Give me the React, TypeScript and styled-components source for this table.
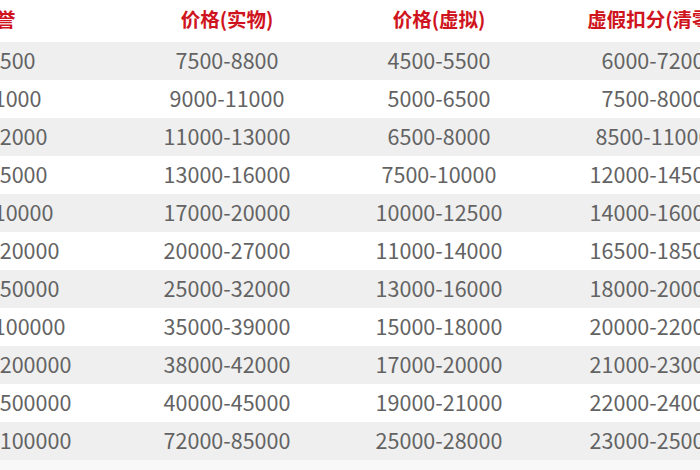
import { createGlobalStyle, styled } from "styled-components";

const GlobalStyle = createGlobalStyle`
  html, body {
    margin: 0;
    padding: 0;
    background: #ffffff;
    overflow: hidden;
  }
  body {
    width: 700px;
    height: 470px;
    font-family: "Noto Sans CJK SC", "Noto Sans", sans-serif;
  }
`;

const Page = styled.div`
  width: 700px;
  height: 470px;
  overflow: hidden;
  background: #f8f8f8;
`;

const Table = styled.div`
  margin-left: -130px;
  width: 890px;
  display: flex;
  flex-direction: column;
`;

const Row = styled.div<{ $shade: "head" | "gray" | "white" }>`
  display: grid;
  grid-template-columns: 252px 210px 214px 214px;
  height: ${(p) => (p.$shade === "head" ? 42 : 38)}px;
  align-items: center;
  background: ${(p) => (p.$shade === "gray" ? "#efefef" : "#ffffff")};
`;

const HeadCell = styled.div`
  text-align: center;
  white-space: nowrap;
  font-size: 19.5px;
  font-weight: 700;
  color: #cf1420;
  line-height: 1;
  padding-bottom: 4px;
`;

const Cell = styled.div`
  text-align: center;
  white-space: nowrap;
  font-size: 21.5px;
  color: #636363;
  line-height: 1;
  padding-bottom: 2px;
`;

const heads = ["信誉", "价格(实物)", "价格(虚拟)", "虚假扣分(清零)"];

const rows: string[][] = [
  ["251-500", "7500-8800", "4500-5500", "6000-7200"],
  ["501-1000", "9000-11000", "5000-6500", "7500-8000"],
  ["1001-2000", "11000-13000", "6500-8000", "8500-11000"],
  ["2001-5000", "13000-16000", "7500-10000", "12000-14500"],
  ["5001-10000", "17000-20000", "10000-12500", "14000-16000"],
  ["10001-20000", "20000-27000", "11000-14000", "16500-18500"],
  ["20001-50000", "25000-32000", "13000-16000", "18000-20000"],
  ["50001-100000", "35000-39000", "15000-18000", "20000-22000"],
  ["100001-200000", "38000-42000", "17000-20000", "21000-23000"],
  ["200001-500000", "40000-45000", "19000-21000", "22000-24000"],
  ["500001-100000", "72000-85000", "25000-28000", "23000-25000"],
];

export default function App() {
  return (
    <>
      <GlobalStyle />
      <Page>
        <Table>
          <Row $shade="head">
            {heads.map((h) => (
              <HeadCell key={h}>{h}</HeadCell>
            ))}
          </Row>
          {rows.map((r, i) => (
            <Row key={i} $shade={i % 2 === 0 ? "gray" : "white"}>
              {r.map((c, j) => (
                <Cell key={j}>{c}</Cell>
              ))}
            </Row>
          ))}
        </Table>
      </Page>
    </>
  );
}
